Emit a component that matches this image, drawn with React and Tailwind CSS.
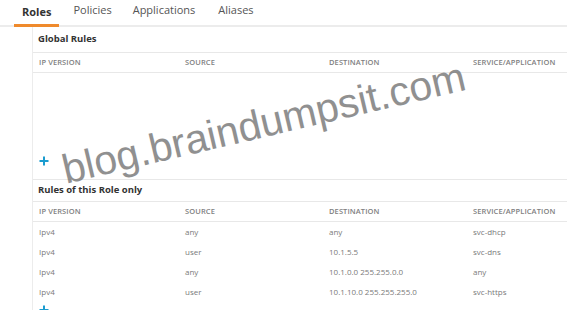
import React from "react";

const cols = "grid grid-cols-[146px_144px_144px_1fr]";

function HeaderRow() {
  return (
    <div className={`${cols} h-[21px] items-center border-y border-[#e8e8e8] pl-[6px] text-[7.5px] font-semibold tracking-[0.1px] text-[#808080] uppercase`}>
      <div>IP Version</div>
      <div>Source</div>
      <div>Destination</div>
      <div>Service/Application</div>
    </div>
  );
}

function Row({ a, b, c, d }) {
  return (
    <div className={`${cols} h-[20px] items-center pl-[6px] text-[8px] text-[#7a7a7a]`}>
      <div>{a}</div>
      <div>{b}</div>
      <div>{c}</div>
      <div>{d}</div>
    </div>
  );
}

function Plus() {
  return (
    <svg width="10" height="10" viewBox="0 0 10 10" className="block">
      <path d="M5 0.5V9.5M0.5 5H9.5" stroke="#1b9ccf" strokeWidth="2" />
    </svg>
  );
}

export default function App() {
  const rows = [
    ["Ipv4", "any", "any", "svc-dhcp"],
    ["Ipv4", "user", "10.1.5.5", "svc-dns"],
    ["Ipv4", "any", "10.1.0.0 255.255.0.0", "any"],
    ["Ipv4", "user", "10.1.10.0 255.255.255.0", "svc-https"],
  ];
  return (
    <div className="relative w-[567px] h-[310px] overflow-hidden bg-white font-['Open_Sans',sans-serif]">
      <div className="flex h-[27px] items-end border-b-2 border-[#ececec]">
        <div className="ml-[14px] flex h-full items-center px-[8px] text-[11px] font-bold text-[#333] border-b-[3px] border-[#ef8a2c] mb-[-2px] pb-[1px]">
          Roles
        </div>
        <div className="ml-[14px] flex h-full items-center px-[0px] pb-[4px] text-[11px] text-[#555]">Policies</div>
        <div className="ml-[21px] flex h-full items-center pb-[4px] text-[11px] text-[#555]">Applications</div>
        <div className="ml-[23px] flex h-full items-center pb-[4px] text-[11px] text-[#555]">Aliases</div>
      </div>
      <div className="ml-[32px] border-l border-[#ececec] h-full">
        <div className="flex h-[25px] items-center pl-[5px] text-[9.5px] font-bold text-[#333]">Global Rules</div>
        <HeaderRow />
        <div className="flex h-[106px] flex-col justify-end pl-[6px] pb-[13px]">
          <Plus />
        </div>
        <div className="flex h-[22px] items-center border-t border-[#e8e8e8] pl-[5px] text-[9.5px] font-bold text-[#333]">
          Rules of this Role only
        </div>
        <HeaderRow />
        {rows.map((r, i) => (
          <Row key={i} a={r[0]} b={r[1]} c={r[2]} d={r[3]} />
        ))}
        <div className="pl-[6px] pt-[3px]">
          <Plus />
        </div>
      </div>
      <div className="pointer-events-none absolute left-[63px] top-[150px] origin-left rotate-[-13.2deg] whitespace-nowrap font-['Liberation_Sans',sans-serif] text-[41px] leading-none text-[#7d7d7d] opacity-85">
        blog.braindumpsit.com
      </div>
    </div>
  );
}
